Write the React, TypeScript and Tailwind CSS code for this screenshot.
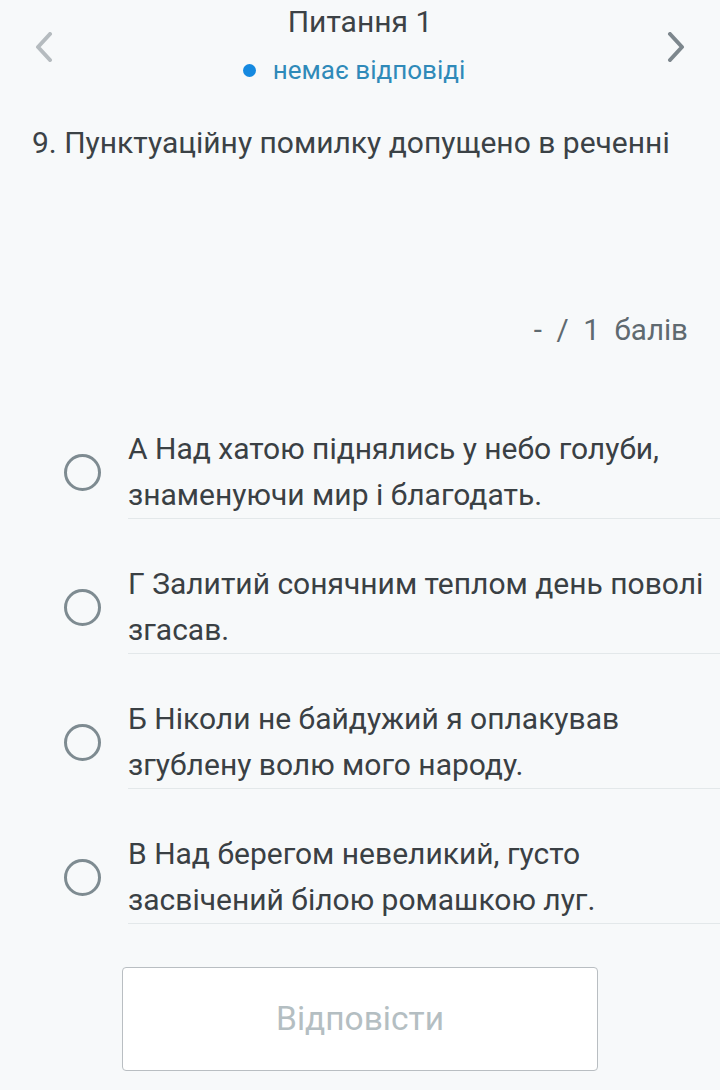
import React from "react";

const options = [
  "А Над хатою піднялись у небо голуби, знаменуючи мир і благодать.",
  "Г Залитий сонячним теплом день поволі згасав.",
  "Б Ніколи не байдужий я оплакував згублену волю мого народу.",
  "В Над берегом невеликий, густо засвічений білою ромашкою луг.",
];

export default function App() {
  return (
    <div
      className="w-[720px] h-[1090px] bg-[#f7f9fa] overflow-hidden text-[#3a4044]"
      style={{ fontFamily: "Roboto, 'Noto Sans', sans-serif" }}
    >
      {/* header */}
      <div className="flex items-start justify-between px-[34px] h-[100px]">
        <svg width="20" height="30" viewBox="0 0 20 30" className="mt-[32px]">
          <path d="M16 2 L4 15 L16 28" fill="none" stroke="#b5bbbf" strokeWidth="4" strokeLinecap="round" strokeLinejoin="round" />
        </svg>
        <div className="flex flex-col items-center pt-[5px]">
          <div className="text-[30px] leading-[34px] text-[#3c4246]">Питання 1</div>
          <div className="flex items-center gap-[17px] mt-[16px] ml-[-12px]">
            <span className="w-[13px] h-[13px] rounded-full bg-[#1589e0]" />
            <span className="text-[26px] leading-[30px] text-[#2f8ab9]">немає відповіді</span>
          </div>
        </div>
        <svg width="20" height="30" viewBox="0 0 20 30" className="mt-[32px]">
          <path d="M4 2 L16 15 L4 28" fill="none" stroke="#7d878d" strokeWidth="4" strokeLinecap="round" strokeLinejoin="round" />
        </svg>
      </div>

      {/* question */}
      <div className="px-[32px] mt-[24px] text-[30px] leading-[38px] text-[#3b4246]">
        9. Пунктуаційну помилку допущено в реченні
      </div>

      {/* points */}
      <div className="flex justify-end px-[32px] mt-[151px] text-[29.5px] leading-[34px] text-[#5f6a70]">
        <span className="whitespace-pre">-  /  1  балів</span>
      </div>

      {/* options */}
      <div className="mt-[79px] flex flex-col">
        {options.map((o, i) => (
          <div key={i} className={`flex items-center ${i > 0 ? "mt-[42px]" : ""}`}>
            <div className="w-[128px] shrink-0 flex pl-[64px]">
              <span className="w-[37px] h-[37px] rounded-full border-[3.5px] border-[#7e8b91]" />
            </div>
            <div className="flex-1 border-b border-[#e3e8ea]">
              <div className="pr-[8px] text-[30px] leading-[46px] text-[#3a4044]">{o}</div>
            </div>
          </div>
        ))}
      </div>

      {/* button */}
      <div className="mt-[43px] pl-[122px]">
        <button className="w-[476px] h-[104px] bg-white border border-[#b9bec2] rounded-[4px] text-[33.5px] text-[#b4bec2]">
          Відповісти
        </button>
      </div>
    </div>
  );
}
